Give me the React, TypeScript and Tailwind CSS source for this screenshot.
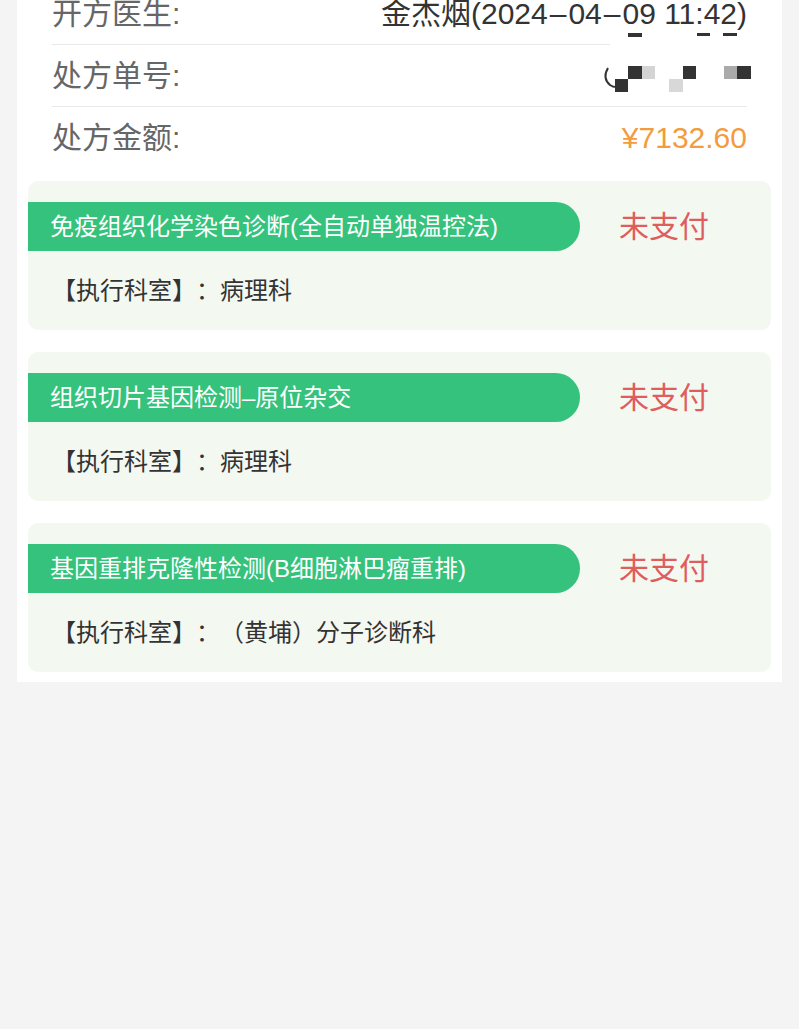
const items = [
  { name: '免疫组织化学染色诊断(全自动单独温控法)', dept: '病理科' },
  { name: '组织切片基因检测–原位杂交', dept: '病理科' },
  { name: '基因重排克隆性检测(B细胞淋巴瘤重排)', dept: '（黄埔）分子诊断科' },
];

const Mosaic = () => (
  <svg
    className="absolute left-[583px] top-[47px]"
    width="155"
    height="70"
    viewBox="0 0 155 70"
  >
    <rect x="10" y="0" width="140" height="70" fill="#ffffff" />
    <rect x="28" y="3" width="14" height="4" fill="#333333" />
    <rect x="97" y="3" width="13" height="3" fill="#333333" />
    <rect x="123" y="3" width="14" height="3" fill="#333333" />
    <path d="M8 38 Q2 48 10 55 Q13 57 16 57" stroke="#333333" strokeWidth="2" fill="none" />
    <rect x="28" y="36" width="14" height="13" fill="#333333" />
    <rect x="42" y="36" width="13" height="13" fill="#d4d4d4" />
    <rect x="15" y="49" width="13" height="13" fill="#333333" />
    <rect x="83" y="36" width="13" height="13" fill="#333333" />
    <rect x="69" y="49" width="14" height="13" fill="#d8d8d8" />
    <rect x="124" y="36" width="13" height="13" fill="#aaaaaa" />
    <rect x="137" y="36" width="14" height="13" fill="#333333" />
  </svg>
);

const InfoRow = ({
  label,
  children,
  border = true,
}: {
  label: string;
  children?: React.ReactNode;
  border?: boolean;
}) => (
  <div
    className={`flex h-[62px] items-center justify-between ${
      border ? 'border-b border-[#e9e9e9]' : ''
    }`}
  >
    <span className="text-[30px] leading-none text-[#666666]">{label}</span>
    {children}
  </div>
);

// dashes in the date are drawn wide, like the phone font does
const Dash = () => <span className="mx-[2px]">–</span>;

export default function App() {
  return (
    <div className="flow-root min-h-screen bg-[#f4f4f4] font-[family-name:'Liberation_Sans','Noto_Sans_CJK_SC',sans-serif] [text-spacing-trim:space-all]">
      <div className="relative mx-[17px] -mt-[17px] bg-white px-[11px] pb-[10px]">
        <div className="px-[24px]">
          <InfoRow label="开方医生:">
            <span className="text-[30px] leading-none text-[#333333]">
              金杰烟(2024<Dash />04<Dash />09 11:42)
            </span>
          </InfoRow>
          <InfoRow label="处方单号:" />
          <InfoRow label="处方金额:" border={false}>
            <span className="text-[30px] leading-none text-[#f39c3f]">¥7132.60</span>
          </InfoRow>
        </div>
        <Mosaic />

        <div className="mt-[12px] flex flex-col gap-[22px]">
          {items.map((item) => (
            <div
              key={item.name}
              className="rounded-[10px] bg-[#f3f8f1] pt-[21px] pb-[27px]"
            >
              <div className="flex items-center">
                <div className="flex h-[49px] w-[552px] items-center rounded-r-full bg-[#35c27c] pl-[22px]">
                  <span className="text-[24px] leading-none whitespace-nowrap text-white">
                    {item.name}
                  </span>
                </div>
                <span className="ml-[39px] text-[30px] leading-none text-[#e05d5d]">
                  未支付
                </span>
              </div>
              <div className="mt-[28px] pl-[24px] text-[24px] leading-none text-[#333333]">
                【执行科室】：{item.dept}
              </div>
            </div>
          ))}
        </div>
      </div>
    </div>
  );
}
